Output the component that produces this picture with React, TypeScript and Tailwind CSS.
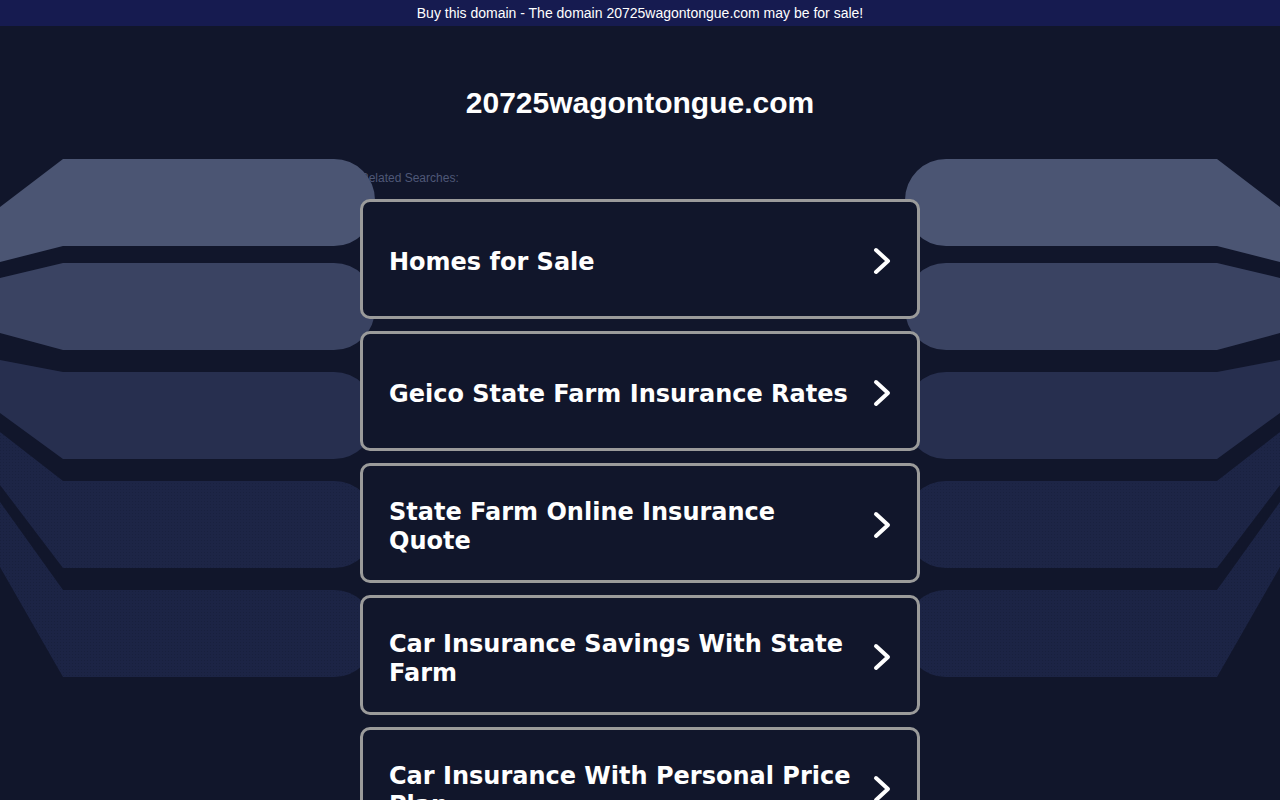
import React from 'react';

const SEARCHES = [
  'Homes for Sale',
  'Geico State Farm Insurance Rates',
  'State Farm Online Insurance Quote',
  'Car Insurance Savings With State Farm',
  'Car Insurance With Personal Price Plan',
];

// top y, y where top edge meets x=0, y where bottom edge meets x=0, fill
const BANDS: [number, number, number, string][] = [
  [159, 207, 262, '#4b5573'],
  [263, 278, 333, '#3a4362'],
  [372, 360, 413, '#272f4f'],
  [481, 432, 485, 'url(#dotsA)'],
  [590, 502, 567, 'url(#dotsB)'],
];

function bandPath(top: number, l1: number, l2: number) {
  const bottom = top + 87;
  const r = 41;
  return `M0,${l1} L63,${top} L${375 - r},${top} A${r},${r} 0 0 1 375,${top + r} L375,${bottom - r} A${r},${r} 0 0 1 ${375 - r},${bottom} L63,${bottom} L0,${l2} Z`;
}

function Bands() {
  return (
    <svg
      className="pointer-events-none absolute left-0 top-0 z-10"
      width="1280"
      height="800"
      viewBox="0 0 1280 800"
    >
      <defs>
        <pattern id="dotsA" width="3" height="3" patternUnits="userSpaceOnUse">
          <rect width="3" height="3" fill="#1d2546" />
          <rect width="1" height="1" fill="#19213f" />
        </pattern>
        <pattern id="dotsB" width="3" height="3" patternUnits="userSpaceOnUse">
          <rect width="3" height="3" fill="#1c2445" />
          <rect width="1" height="1" fill="#18203d" />
        </pattern>
      </defs>
      {BANDS.map(([top, l1, l2, fill]) => (
        <path key={`l${top}`} d={bandPath(top, l1, l2)} fill={fill} />
      ))}
      <g transform="translate(1280,0) scale(-1,1)">
        {BANDS.map(([top, l1, l2, fill]) => (
          <path key={`r${top}`} d={bandPath(top, l1, l2)} fill={fill} />
        ))}
      </g>
    </svg>
  );
}

function Chevron() {
  return (
    <svg width="20" height="30" viewBox="0 0 20 30" className="shrink-0">
      <polyline
        points="5,4 17,15 5,26"
        fill="none"
        stroke="#ffffff"
        strokeWidth="4"
        strokeLinecap="round"
        strokeLinejoin="round"
      />
    </svg>
  );
}

export default function App() {
  return (
    <div className="relative min-h-screen overflow-hidden bg-[#11162b] font-['Liberation_Sans',Arial,sans-serif]">
      <div className="flex h-[26px] items-center justify-center bg-[#161b50] text-[14px] text-white">
        Buy this domain - The domain 20725wagontongue.com may be for sale!
      </div>

      <h1 className="mt-[58px] text-center text-[30px] font-bold leading-[38px] text-white">
        20725wagontongue.com
      </h1>

      <Bands />

      <div className="mx-auto mt-[49px] w-[560px]">
        <div className="text-[12px] leading-[14px] text-[#4f5877]">Related Searches:</div>
        <div className="relative z-20 mt-[14px] flex flex-col gap-[12px]">
          {SEARCHES.map((s) => (
            <div
              key={s}
              className="flex h-[120px] items-center gap-4 rounded-[10px] border-[3px] border-[#9b9b9b] bg-[#11162b] pl-[26px] pr-[26px] pt-[4px]"
            >
              <div className="flex-1 pt-[3px] font-['DejaVu_Sans',Verdana,sans-serif] text-[24px] font-bold leading-[29px] text-white">
                {s}
              </div>
              <Chevron />
            </div>
          ))}
        </div>
      </div>
    </div>
  );
}
